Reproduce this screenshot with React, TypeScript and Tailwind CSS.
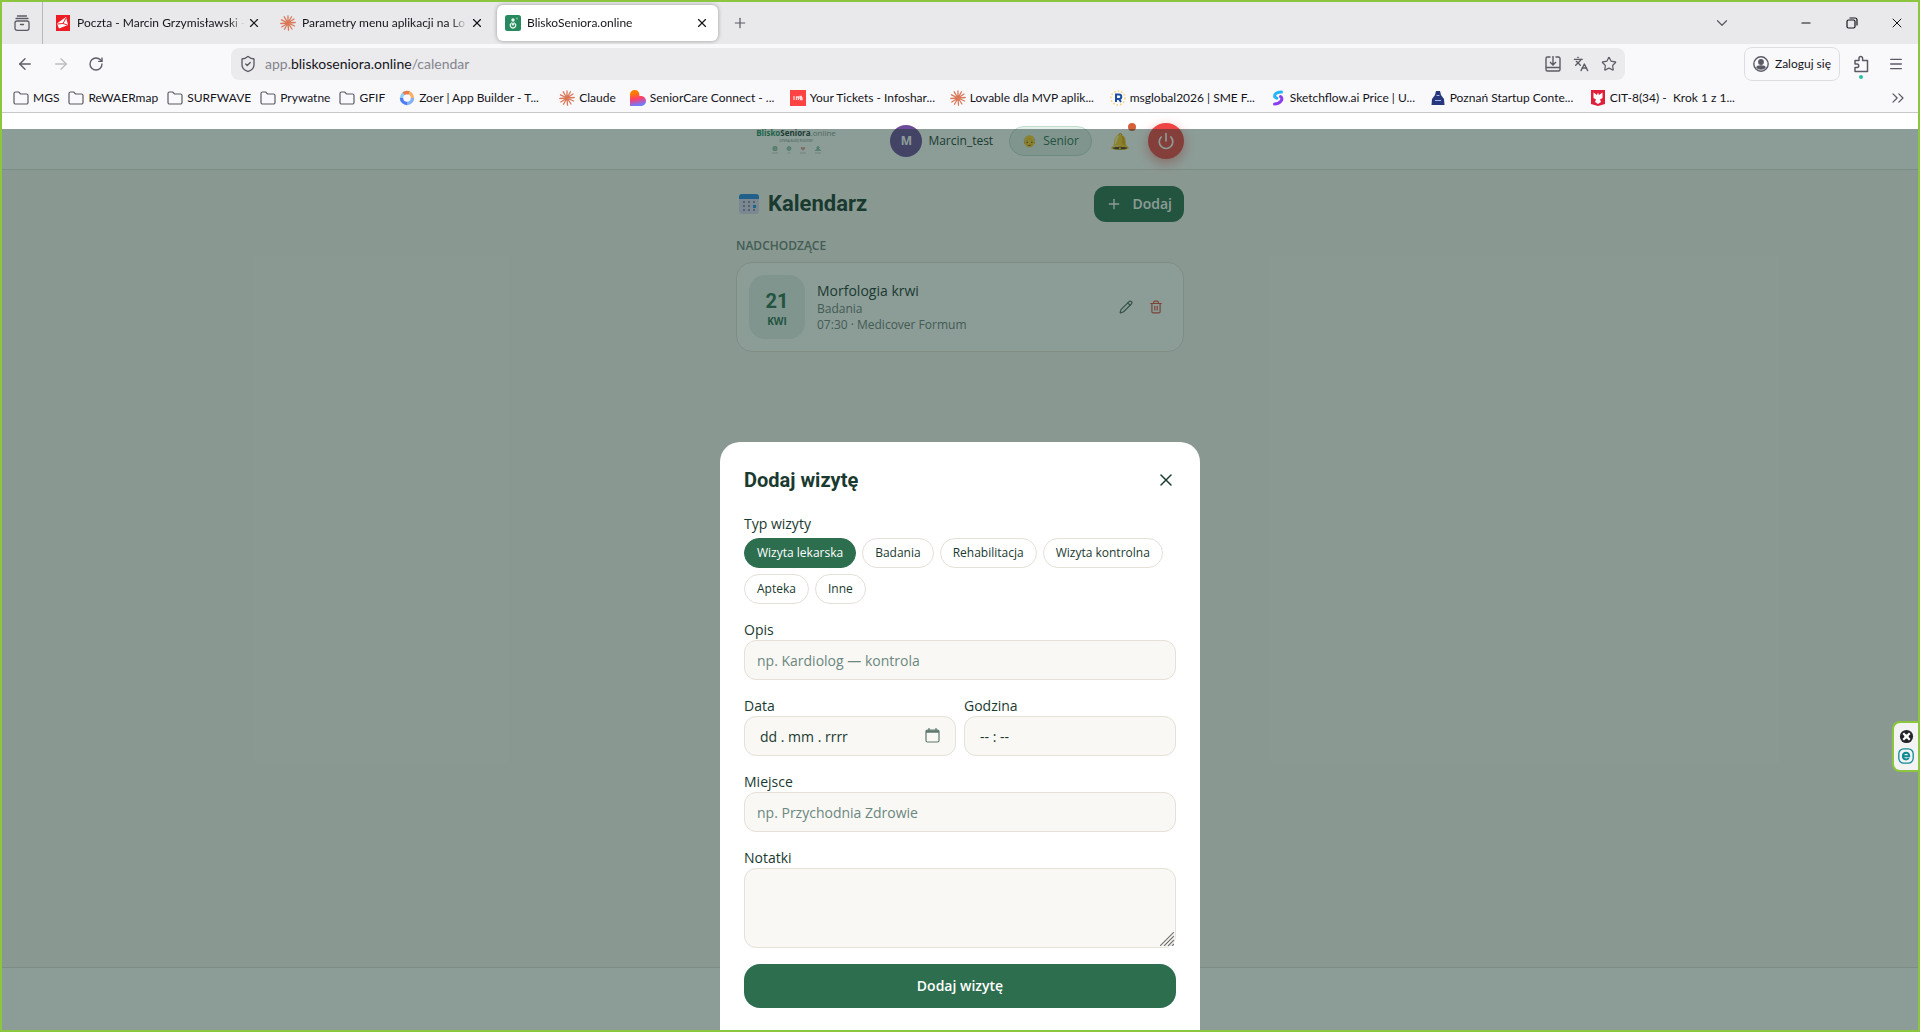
import React, { useState } from 'react';
import {
  ArrowLeft,
  ArrowRight,
  ChevronDown,
  ChevronsRight,
  Languages,
  Menu,
  Minus,
  Pencil,
  Plus,
  Power,
  RotateCw,
  ShieldCheck,
  Star,
  Trash2,
  X,
} from 'lucide-react';

const FolderIcon = () => (
  <svg viewBox="0 0 16 16" className="size-4 shrink-0" fill="none" stroke="#5b5b66" strokeWidth="1.2">
    <path d="M1 3.5A1.5 1.5 0 0 1 2.5 2h3.2l1.8 2h6A1.5 1.5 0 0 1 15 5.500v7A1.500 1.500 0 0 1 13.500 14h-11A1.500 1.500 0 0 1 1 12.500z" />
  </svg>
);

const ClaudeIcon = () => (
  <svg viewBox="0 0 16 16" className="size-4 shrink-0" stroke="#d97757" strokeWidth="1.3" strokeLinecap="round">
    <path d="M8 8 8 1M8 8 11.500 1.800M8 8 14 4M8 8 15.200 7.500M8 8 14.500 11M8 8 12 14M8 8 8.500 15.200M8 8 4.500 14.200M8 8 1.800 12M8 8 .8 8.500M8 8 1.500 4.800M8 8 4.200 1.800" />
  </svg>
);

const ZoerIcon = () => (
  <svg viewBox="0 0 16 16" className="size-4 shrink-0" fill="none" strokeWidth="3.400">
    <path d="M8 2.500A5.500 5.500 0 0 1 13.500 8" stroke="#f7b267" />
    <path d="M13.500 8A5.500 5.500 0 0 1 8 13.500" stroke="#7fb2fb" />
    <path d="M8 13.500A5.500 5.500 0 0 1 2.500 8" stroke="#4f7df3" />
    <path d="M2.500 8A5.500 5.500 0 0 1 8 2.500" stroke="#8fd0f5" />
    <path d="M4.500 3.600A5.500 5.500 0 0 1 10 2.900" stroke="#ef7b4d" />
  </svg>
);

const LovableIcon = () => (
  <svg viewBox="0 0 16 16" className="size-4 shrink-0">
    <defs>
      <linearGradient id="lovable" x1="0.300" y1="0" x2="0.500" y2="1">
        <stop offset="0.200" stopColor="#ff7a00" />
        <stop offset="0.550" stopColor="#ff3d6e" />
        <stop offset="0.950" stopColor="#6f7bff" />
      </linearGradient>
    </defs>
    <path d="M0 4.500C0 2 2 0 4.700 0s4.700 2 4.700 4.500V6h1.500C13.800 6 16 8.200 16 11s-2.200 5-5.100 5H0z" fill="url(#lovable)" />
  </svg>
);

const TicketsIcon = () => (
  <svg viewBox="0 0 16 16" className="size-4 shrink-0">
    <rect width="16" height="16" fill="#ff4343" />
    <path d="M4 6v4M6.500 10V7h2v3M10 9.500h2V8h-2V6.500h2" stroke="#ffd9d9" strokeWidth="1.300" fill="none" />
  </svg>
);

const MsGlobalIcon = () => (
  <svg viewBox="0 0 16 16" className="size-4 shrink-0">
    <circle cx="8" cy="8" r="7" fill="none" stroke="#f3d47a" strokeWidth="1.600" strokeDasharray="1.600 2" />
    <path d="M6 12V4.500h3a2 2 0 0 1 0 4.500H6M9 9l2 3" stroke="#1d4fa3" strokeWidth="2" fill="none" />
  </svg>
);

const SketchflowIcon = () => (
  <svg viewBox="0 0 16 16" className="size-4 shrink-0" fill="none" strokeWidth="3" strokeLinecap="round">
    <path d="M11.500 2C7 2.300 4.500 4 4.600 6.200c.1 1.200 1.200 1.700 2.400 2" stroke="#23b5f5" />
    <path d="M10.500 6.500c2 1.300 1.600 3.400.3 4.800C9.500 12.800 7.500 14 4.500 14" stroke="#8b3df0" />
  </svg>
);

const PoznanIcon = () => (
  <svg viewBox="0 0 16 16" className="size-4 shrink-0">
    <path d="M6 1h4l1 4 3 4 .5 6h-13L2 9l3-4z" fill="#26377d" />
    <path d="M5 10.500h6M6.500 5.500h3" stroke="#aab7e8" strokeWidth="1.200" />
  </svg>
);

const EagleIcon = () => (
  <svg viewBox="0 0 16 16" className="size-4 shrink-0">
    <path d="M1 0h14v14l-7 2-7-2z" fill="#e0203a" />
    <path d="M8 2.500 9 5l3.500-2.500V8L10 9.500l1 2.500-3 2-3-2 1-2.500L3.500 8V2.500L7 5z" fill="#fff" />
  </svg>
);

const MailTabIcon = () => (
  <svg viewBox="0 0 16 16" className="size-4 shrink-0">
    <rect x="1" width="14" height="16" fill="#ee1c25" />
    <path d="M2 8.500 11 2l2 8-9 3.500z" fill="#fff" />
    <path d="M2.500 9 8 8.500 11 3M8 8.500l4.500 1.500" stroke="#ee1c25" strokeWidth="1" fill="none" />
  </svg>
);

const SeniorTabIcon = () => (
  <svg viewBox="0 0 16 16" className="size-4 shrink-0">
    <rect width="16" height="16" rx="2.500" fill="#268a5e" />
    <circle cx="8" cy="5" r="1.700" fill="#e8f6ee" />
    <path d="M6 8.500C4.800 9.500 5 13 8 13s3.200-3.500 2-4.500M6.500 7.500 8 10l1.500-2.500" stroke="#e8f6ee" strokeWidth="1.400" fill="none" />
    <circle cx="12" cy="3.500" r="1" fill="#7cc7a3" />
  </svg>
);

const CalendarEmoji = () => (
  <svg viewBox="0 0 22 22" className="size-[22px]">
    <rect x="1" y="1" width="20" height="20" rx="3" fill="#dcd6f2" />
    <path d="M1 6V4a3 3 0 0 1 3-3h14a3 3 0 0 1 3 3v2z" fill="#2a86e8" />
    <g fill="#8f8ba8">
      <path d="M5 8h2v2H5zM10 8h2v2h-2zM15 8h2v2h-2zM5 12h2v2H5zM10 12h2v2h-2zM5 16h2v2H5zM10 16h2v2h-2zM15 16h2v2h-2z" />
    </g>
    <rect x="15" y="12" width="3" height="3" fill="#1d8fe8" />
  </svg>
);

const folders = ['MGS', 'ReWAERmap', 'SURFWAVE', 'Prywatne', 'GFIF'];

const bookmarks = [
  { title: 'Zoer | App Builder - T...', icon: <ZoerIcon />, long: true },
  { title: 'Claude', icon: <ClaudeIcon />, long: false },
  { title: 'SeniorCare Connect - ...', icon: <LovableIcon />, long: true },
  { title: 'Your Tickets - Infoshar...', icon: <TicketsIcon />, long: true },
  { title: 'Lovable dla MVP aplik...', icon: <ClaudeIcon />, long: true },
  { title: 'msglobal2026 | SME F...', icon: <MsGlobalIcon />, long: true },
  { title: 'Sketchflow.ai Price | U...', icon: <SketchflowIcon />, long: true },
  { title: 'Poznań Startup Conte...', icon: <PoznanIcon />, long: true },
  { title: 'CIT-8(34) -  Krok 1 z 1...', icon: <EagleIcon />, long: true },
];

const tabs = [
  { title: 'Poczta - Marcin Grzymisławski -', icon: <MailTabIcon />, active: false },
  { title: 'Parametry menu aplikacji na Lo', icon: <ClaudeIcon />, active: false },
  { title: 'BliskoSeniora.online', icon: <SeniorTabIcon />, active: true },
];

const TabBar = () => (
  <div className="flex h-[42px] items-center bg-[#e9e9eb]">
    <div className="flex w-[41px] justify-center self-stretch border-r border-[#b9b9bd]">
      <button aria-label="Widok kart">
        <svg viewBox="0 0 16 16" className="size-4" fill="none" stroke="#5b5b66" strokeWidth="1.300" strokeLinecap="round">
          <path d="M3.500 1h9M2 3.500h12" />
          <rect x="1" y="6" width="14" height="9.300" rx="2" />
          <path d="M6.500 9.500h3" />
        </svg>
      </button>
    </div>
    <div className="flex gap-1 pl-1">
      {tabs.map((tab) => (
        <div
          key={tab.title}
          className={`flex h-9 w-[221px] items-center rounded-md pl-2 pr-1.5 ${
            tab.active ? 'bg-white shadow-[0_0_4px_rgba(0,0,0,0.35)]' : ''
          }`}
        >
          {tab.icon}
          <span className="ml-1.5 flex-1 whitespace-nowrap [mask-image:linear-gradient(to_left,transparent,black_16px)]">
            {tab.title}
          </span>
          <button aria-label="Zamknij kartę" className="flex w-5 justify-center">
            <X className="size-3.5" strokeWidth={2} />
          </button>
        </div>
      ))}
    </div>
    <button aria-label="Nowa karta" className="ml-2 p-1.5 text-[#5b5b66]">
      <Plus className="size-4" strokeWidth={1.8} />
    </button>
    <div className="ml-auto flex items-center">
      <button aria-label="Lista kart" className="mr-[52px] text-[#5b5b66]">
        <ChevronDown className="size-[18px]" strokeWidth={1.6} />
      </button>
      <button aria-label="Minimalizuj" className="flex w-[46px] justify-center">
        <Minus className="size-3.5" strokeWidth={1.8} />
      </button>
      <button aria-label="Przywróć" className="flex w-[46px] justify-center">
        <svg viewBox="0 0 12 12" className="size-3" fill="none" stroke="#15141a" strokeWidth="1.200">
          <rect x="1" y="3" width="8" height="8" rx="1.500" />
          <path d="M3.500 1h5.500a2 2 0 0 1 2 2v5.500" />
        </svg>
      </button>
      <button aria-label="Zamknij" className="flex w-[43px] justify-center">
        <X className="size-4" strokeWidth={1.500} />
      </button>
    </div>
  </div>
);

const AddressBar = () => (
  <div className="flex h-10 items-center pl-3.5 pr-2.5 text-[#5b5b66]">
    <div className="flex w-[215px] items-center gap-[18px]">
      <button aria-label="Wstecz"><ArrowLeft className="size-[18px]" strokeWidth={1.800} /></button>
      <button aria-label="Dalej" className="text-[#bcbcc2]"><ArrowRight className="size-[18px]" strokeWidth={1.800} /></button>
      <button aria-label="Odśwież"><RotateCw className="size-4" strokeWidth={2} /></button>
    </div>
    <div className="flex h-8 flex-1 items-center gap-3 rounded-lg bg-[#ebebed] px-2">
      <ShieldCheck className="size-[18px]" strokeWidth={1.800} />
      <a href="#" className="-ml-1 text-sm text-[#84848c]">
        app.<span className="text-[#15141a]">bliskoseniora.online</span>/calendar
      </a>
      <button aria-label="Zainstaluj" className="ml-auto">
        <svg viewBox="0 0 16 16" className="size-4" fill="none" stroke="currentColor" strokeWidth="1.400">
          <path d="M5.500 1h-3A1.500 1.500 0 0 0 1 2.500v11A1.500 1.500 0 0 0 2.500 15h11a1.500 1.500 0 0 0 1.500-1.500v-11A1.500 1.500 0 0 0 13.500 1h-3M8 0v8.500M5 6l3 3 3-3M1 11.500h14" />
        </svg>
      </button>
      <button aria-label="Przetłumacz"><Languages className="size-4" strokeWidth={2} /></button>
      <button aria-label="Dodaj zakładkę"><Star className="size-4" strokeWidth={1.800} /></button>
    </div>
    <div className="ml-[119px] flex items-center">
      <button className="flex h-[34px] items-center gap-1.5 rounded-lg border border-[#dedee2] px-2 text-[#15141a]">
        <svg viewBox="0 0 16 16" className="size-4" fill="none" stroke="#5b5b66" strokeWidth="1.400">
          <circle cx="8" cy="8" r="7.200" />
          <circle cx="8" cy="6" r="2.200" fill="#5b5b66" />
          <path d="M4 11.500c0-2 8-2 8 0-1.500 2-6.500 2-8 0z" fill="#5b5b66" />
        </svg>
        Zaloguj się
      </button>
      <button aria-label="Rozszerzenia" className="relative ml-3">
        <svg viewBox="0 0 18 18" className="size-[18px]" fill="none" stroke="currentColor" strokeWidth="1.500" strokeLinejoin="round">
          <path d="M3 16.500v-4h2a1.700 1.700 0 0 0 0-3.500H3V5.500h4V3.300a1.800 1.800 0 0 1 3.600 0v2.200h4.900v11z" />
        </svg>
        <span className="absolute -bottom-1.5 left-[7px] size-1 rounded-full bg-[#2ac3a2]" />
      </button>
      <button aria-label="Menu" className="ml-[18px] mr-1"><Menu className="size-4" strokeWidth={2} /></button>
    </div>
  </div>
);

const BookmarksBar = () => (
  <div className="flex h-[29px] items-center gap-3.5 whitespace-nowrap border-b border-[#c8c8c8] pl-[11px] pr-2.5">
    <div className="flex items-center gap-[9px]">
      {folders.map((name) => (
        <button key={name} className="flex items-center gap-1">
          <FolderIcon />
          {name}
        </button>
      ))}
    </div>
    {bookmarks.map((b) => (
      <a key={b.title} href="#" className="flex items-center gap-1">
        {b.icon}
        <span className={b.long ? 'w-[126px] whitespace-pre' : ''}>{b.title}</span>
      </a>
    ))}
    <button aria-label="Więcej zakładek" className="ml-auto text-[#5b5b66]">
      <ChevronsRight className="size-5" strokeWidth={1.500} />
    </button>
  </div>
);

const Logo = () => (
  <div className="flex w-[120px] flex-col items-center">
    <p className="text-[8px] font-bold leading-[8px] text-[#1a3a30]">
      <span className="text-[#1f8a5f]">Blisko</span>Seniora<span className="font-normal text-[#8a9a92]">.online</span>
    </p>
    <p className="mt-0.5 text-[3px] leading-[4px] text-[#6b8078]">OPIEKA BLIŻEJ RODZINY</p>
    <svg viewBox="0 0 52 8" className="mt-[3px] h-2 w-[52px]">
      <g fill="#a8cdbb" stroke="#7fb89c" strokeWidth="0.800">
        <rect x="3" y="0.500" width="4" height="4" rx="1" />
        <circle cx="19" cy="2.500" r="2" />
        <circle cx="48" cy="1.800" r="1.200" />
        <path d="M45.500 5c0-2.500 5-2.500 5 0" />
      </g>
      <path d="M33 4.800 30.800 2.400c-.5-1.600 1.600-2 2.200-.8.6-1.200 2.700-.8 2.200.8z" fill="#e39a9a" />
      <path d="M2 7h6M17.500 7h3M30 7h6M45 7h6" stroke="#b4c0ba" strokeWidth="0.700" />
    </svg>
  </div>
);

const AppHeader = () => (
  <header className="border-b border-[#dfe0da] bg-white">
    <div className="mx-auto flex w-full max-w-[480px] items-center gap-2.5 px-4 py-2.5">
      <Logo />
      <div className="ml-auto mr-1.5 flex items-center gap-1.5">
        <span className="flex size-8 items-center justify-center rounded-full bg-[#6d4c9c] text-xs font-bold text-white">M</span>
        <span className="text-xs font-medium">Marcin_test</span>
      </div>
      <span className="flex h-[30px] items-center gap-1.5 rounded-full border border-[#bfdccd] bg-[#e6f0eb] px-3 text-xs font-medium text-[#2d6e4f]">
        <span>👴</span>
        Senior
      </span>
      <button aria-label="Powiadomienia" className="relative size-9 text-base">
        🔔
        <span className="absolute right-0.5 top-0 size-2 rounded-full bg-[#d4613a]" />
      </button>
      <button
        aria-label="Wyloguj"
        className="flex size-9 items-center justify-center rounded-full bg-[#ef4444] text-white shadow-[0_4px_12px_rgba(239,68,68,0.5)]"
      >
        <Power className="size-[18px]" strokeWidth={2.200} />
      </button>
    </div>
  </header>
);

const CalendarPage = () => (
  <section className="mx-auto w-full max-w-[480px] flex-1 p-4">
    <div className="flex items-center justify-between">
      <h1 className="flex items-center gap-2 pl-0.5 font-['Roboto','Noto_Sans',sans-serif] text-[22px] font-bold leading-7">
        <CalendarEmoji />
        Kalendarz
      </h1>
      <button className="flex h-9 items-center gap-2.5 rounded-xl bg-[#2d6e4f] px-3 text-sm font-semibold text-white">
        <Plus className="size-4" />
        Dodaj
      </button>
    </div>
    <h2 className="mt-4 text-xs font-semibold text-[#6b8078]">NADCHODZĄCE</h2>
    <article className="mt-2 flex items-center gap-3 rounded-2xl border border-[#e5e0d8] bg-white p-3">
      <div className="flex h-16 w-14 flex-col items-center justify-center rounded-2xl bg-[#e6f0eb] font-bold text-[#2d6e4f]">
        <span className="mt-1 font-['Roboto','Noto_Sans',sans-serif] text-xl leading-6">21</span>
        <span className="text-[10px] leading-4">KWI</span>
      </div>
      <div className="flex-1">
        <h3 className="text-sm font-medium">Morfologia krwi</h3>
        <p className="text-xs text-[#6b8078]">Badania</p>
        <p className="text-xs text-[#6b8078]">07:30 · Medicover Formum</p>
      </div>
      <div className="flex items-center">
        <button aria-label="Edytuj" className="p-2 text-[#4d6a5e]"><Pencil className="size-3.5" /></button>
        <button aria-label="Usuń" className="p-2 text-[#dc4a3d]"><Trash2 className="size-3.5" /></button>
      </div>
    </article>
  </section>
);

const visitTypes = ['Wizyta lekarska', 'Badania', 'Rehabilitacja', 'Wizyta kontrolna', 'Apteka', 'Inne'];

const inputClass =
  'block h-10 w-full rounded-xl border border-[#e5e0d8] bg-[#f9f8f4] px-3 text-sm placeholder:text-[#6b8780]';

const VisitForm = () => {
  const [type, setType] = useState('Wizyta lekarska');
  const [date, setDate] = useState('dd . mm . rrrr');
  const [time, setTime] = useState('-- : --');

  return (
    <form
      onSubmit={(e) => e.preventDefault()}
      className="flex w-full max-w-[480px] flex-col gap-4 rounded-t-[20px] bg-white px-6 pb-[22px] pt-6"
    >
      <div className="mb-1 flex items-center justify-between">
        <h2 className="font-['Roboto','Noto_Sans',sans-serif] text-xl font-bold">Dodaj wizytę</h2>
        <button type="button" aria-label="Zamknij"><X className="size-5" strokeWidth={1.800} /></button>
      </div>
      <fieldset>
        <legend className="mb-1 text-sm font-medium">Typ wizyty</legend>
        <div className="flex flex-wrap gap-1.5">
          {visitTypes.map((name) => (
            <button
              key={name}
              type="button"
              onClick={() => setType(name)}
              className={`h-[30px] rounded-full border px-3 text-xs font-medium ${
                type === name ? 'border-[#2d6e4f] bg-[#2d6e4f] text-white' : 'border-[#e5e0d8] bg-white'
              }`}
            >
              {name}
            </button>
          ))}
        </div>
      </fieldset>
      <div>
        <label htmlFor="title" className="block text-sm font-medium">Opis</label>
        <input id="title" type="text" placeholder="np. Kardiolog — kontrola" className={inputClass} />
      </div>
      <div className="grid grid-cols-2 gap-2">
        <div>
          <label htmlFor="date" className="block text-sm font-medium">Data</label>
          <div className="relative">
            <input id="date" type="text" value={date} onChange={(e) => setDate(e.target.value)} className={`${inputClass} indent-[3px]`} />
            <button type="button" aria-label="Wybierz datę" className="absolute right-4 top-3">
              <svg viewBox="0 0 15 15" className="size-[15px]" fill="none" stroke="#5f7870" strokeWidth="1.200">
                <rect x="1" y="2" width="13" height="12" rx="1.500" />
                <path d="M1 3.500h13" strokeWidth="2.500" />
                <path d="M4 0v3M11 0v3" />
              </svg>
            </button>
          </div>
        </div>
        <div>
          <label htmlFor="time" className="block text-sm font-medium">Godzina</label>
          <input id="time" type="text" value={time} onChange={(e) => setTime(e.target.value)} className={`${inputClass} indent-[3px]`} />
        </div>
      </div>
      <div>
        <label htmlFor="place" className="block text-sm font-medium">Miejsce</label>
        <input id="place" type="text" placeholder="np. Przychodnia Zdrowie" className={inputClass} />
      </div>
      <div>
        <label htmlFor="notes" className="block text-sm font-medium">Notatki</label>
        <div className="relative">
          <textarea id="notes" className="block h-20 w-full resize-none rounded-xl border border-[#e5e0d8] bg-[#f9f8f4] px-3 py-2 text-sm" />
          <svg viewBox="0 0 14 14" className="absolute bottom-0.5 right-0.5 size-3.5" stroke="#6f6f6f" strokeWidth="1.100">
            <path d="M0 14 14 0M4 14 14 4M8 14l6-6M12 14l2-2" />
          </svg>
        </div>
      </div>
      <button type="submit" className="h-11 rounded-2xl bg-[#2d6e4f] text-sm font-semibold text-white">
        Dodaj wizytę
      </button>
    </form>
  );
};

const SideWidget = () => (
  <aside className="absolute right-0 top-[608px] flex flex-col items-center gap-1 rounded-l-lg border-2 border-r-0 border-[#8cc63f] bg-[#f3f3f3] px-1 py-1.5">
    <button aria-label="Ukryj">
      <svg viewBox="0 0 16 16" className="size-[15px]">
        <circle cx="8" cy="8" r="7" fill="#23232b" />
        <path d="m4.500 4.500 7 7M11.500 4.500l-7 7" stroke="#fff" strokeWidth="2.400" />
        <circle cx="8" cy="8" r="2.200" fill="#fff" />
      </svg>
    </button>
    <button aria-label="Ochrona">
      <svg viewBox="0 0 16 16" className="size-4" fill="none" stroke="#0e8a94">
        <rect x="0.800" y="0.800" width="14.400" height="14.400" rx="5" strokeWidth="1.300" />
        <path d="M5 8.200h6.200c0-4.700-6.300-4.500-6.300.1 0 3.500 4.300 3.900 5.900 1.700" strokeWidth="2" />
      </svg>
    </button>
  </aside>
);

export default function App() {
  return (
    <div className="flex h-screen flex-col overflow-hidden border-2 border-[#8cc63f] bg-[#f9f9fb] font-['Lato','Noto_Sans',sans-serif] text-xs text-[#15141a]">
      <TabBar />
      <AddressBar />
      <BookmarksBar />
      <main className="relative flex flex-1 flex-col overflow-hidden bg-[#f9f7f3] font-['Open_Sans','Noto_Sans',sans-serif] text-[#1a3a30]">
        <AppHeader />
        <CalendarPage />
        <footer className="h-[63px] border-t border-[#dfe0da] bg-white" />
        <div className="absolute inset-x-0 bottom-0 top-4 flex items-end justify-center bg-[#1a3a30]/50">
          <VisitForm />
        </div>
        <SideWidget />
      </main>
    </div>
  );
}
